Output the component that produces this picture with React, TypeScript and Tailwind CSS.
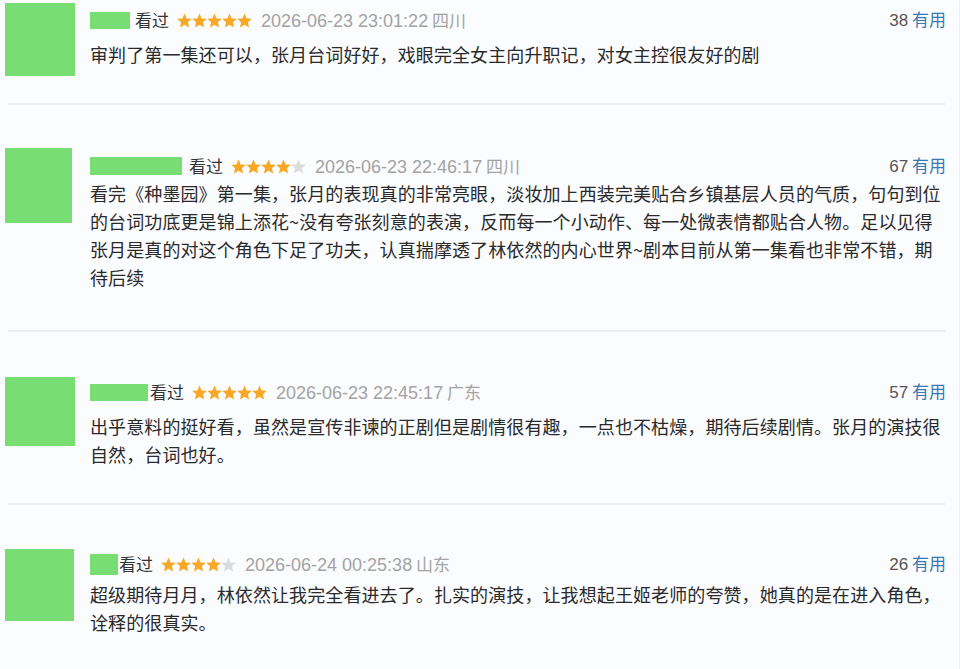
import React from "react"

type Review = {
  nameW: number
  nameH: number
  stars: number
  date: string
  place: string
  count: number
  lines: string[]
  avatar: { w: number; h: number; mt: number }
  headMt: number
  textMt: number
  pb: number
  gapName: string
}

const reviews: Review[] = [
  {
    nameW: 40,
    nameH: 17,
    stars: 5,
    date: "2026-06-23 23:01:22",
    place: "四川",
    count: 38,
    lines: ["审判了第一集还可以，张月台词好好，戏眼完全女主向升职记，对女主控很友好的剧"],
    avatar: { w: 70, h: 73, mt: 3 },
    headMt: 8,
    textMt: 8,
    pb: 27,
    gapName: "ml-[5px]",
  },
  {
    nameW: 92,
    nameH: 18,
    stars: 4,
    date: "2026-06-23 22:46:17",
    place: "四川",
    count: 67,
    lines: [
      "看完《种墨园》第一集，张月的表现真的非常亮眼，淡妆加上西装完美贴合乡镇基层人员的气质，句句到位",
      "的台词功底更是锦上添花~没有夸张刻意的表演，反而每一个小动作、每一处微表情都贴合人物。足以见得",
      "张月是真的对这个角色下足了功夫，认真揣摩透了林依然的内心世界~剧本目前从第一集看也非常不错，期",
      "待后续",
    ],
    avatar: { w: 67, h: 75, mt: 43 },
    headMt: 49,
    textMt: 1,
    pb: 39,
    gapName: "ml-[7px]",
  },
  {
    nameW: 58,
    nameH: 17,
    stars: 5,
    date: "2026-06-23 22:45:17",
    place: "广东",
    count: 57,
    lines: [
      "出乎意料的挺好看，虽然是宣传非谏的正剧但是剧情很有趣，一点也不枯燥，期待后续剧情。张月的演技很",
      "自然，台词也好。",
    ],
    avatar: { w: 70, h: 69, mt: 45 },
    headMt: 48,
    textMt: 8,
    pb: 35,
    gapName: "ml-[2px]",
  },
  {
    nameW: 28,
    nameH: 21,
    stars: 4,
    date: "2026-06-24 00:25:38",
    place: "山东",
    count: 26,
    lines: [
      "超级期待月月，林依然让我完全看进去了。扎实的演技，让我想起王姬老师的夸赞，她真的是在进入角色，",
      "诠释的很真实。",
    ],
    avatar: { w: 69, h: 72, mt: 44 },
    headMt: 47,
    textMt: 4,
    pb: 40,
    gapName: "ml-[1px]",
  },
]

function Star({ on }: { on: boolean }) {
  return (
    <svg width="15" height="15" viewBox="1 1.2 22 21" className="shrink-0">
      <polygon
        points="12,1.5 15.1,8.6 22.8,9.3 17,14.4 18.7,22 12,18 5.3,22 7,14.4 1.2,9.3 8.9,8.6"
        fill={on ? "#f9a825" : "#dcdcdc"}
      />
    </svg>
  )
}

function Card({ r, idx }: { r: Review; idx: number }) {
  return (
    <div>
      <div className="flex items-start" style={{ paddingBottom: r.pb }}>
        <div
          className="ml-[5px] shrink-0 bg-[#78de74]"
          style={{ width: r.avatar.w, height: r.avatar.h, marginTop: r.avatar.mt }}
        />
        <div className="min-w-0 flex-1" style={{ marginTop: r.headMt, marginLeft: 90 - 5 - r.avatar.w }}>
          <div className="flex h-6 items-center pr-[13px]">
            <div className="shrink-0 bg-[#78de74]" style={{ width: r.nameW, height: r.nameH }} />
            <span className={`${r.gapName} text-[17px] leading-6 text-[#333]`}>看过</span>
            <span className="ml-[8px] flex">
              {[0, 1, 2, 3, 4].map((i) => (
                <Star key={i} on={i < r.stars} />
              ))}
            </span>
            <span className="ml-[9px] text-[17px] leading-6 text-[#a3a3a3]">
              <span className="font-['Liberation_Sans',sans-serif] text-[18px]">{r.date}</span> {r.place}
            </span>
            <span className="ml-auto text-[17px] leading-6 text-[#555]">
              <span className="font-['Liberation_Sans',sans-serif]">{r.count}</span>{" "}
              <span className="text-[#3b77b0]">有用</span>
            </span>
          </div>
          <div className="text-[18px] leading-[28px] tracking-[0.1px] text-[#2a2a2a]" style={{ marginTop: r.textMt }}>
            {r.lines.map((l, i) => (
              <div key={i} className="h-[28px] whitespace-nowrap">
                {l}
              </div>
            ))}
          </div>
        </div>
      </div>
      {idx < reviews.length - 1 && <div className="ml-[8px] mr-[14px] h-[2px] bg-[#eceef2]" />}
    </div>
  )
}

export default function App() {
  return (
    <div
      className="h-[669px] w-[960px] overflow-hidden border-r border-[#f0f1f4] bg-[#fbfcfe]"
      style={{ fontFamily: '"Noto Sans CJK SC", "Noto Sans", sans-serif' }}
    >
      {reviews.map((r, i) => (
        <Card key={i} r={r} idx={i} />
      ))}
    </div>
  )
}
